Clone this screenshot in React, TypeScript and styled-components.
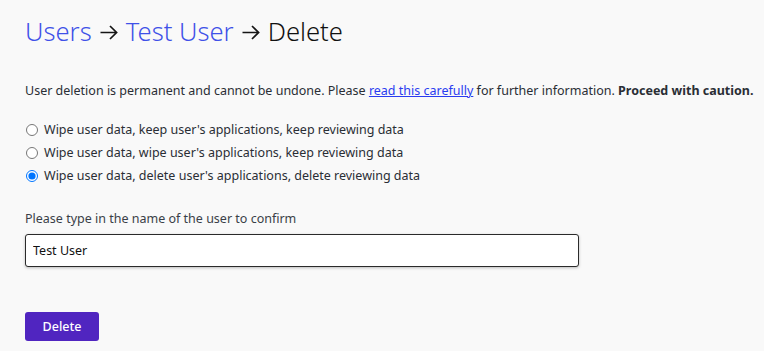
import React from "react";
import styled, { createGlobalStyle } from "styled-components";

const GlobalStyle = createGlobalStyle`
  body {
    margin: 0;
    background: #f9f9f9;
    font-family: "Noto Sans", "Open Sans", sans-serif;
    color: #1f2329;
  }
`;

const Page = styled.main`
  padding: 12px 4px 10px 25px;
`;

const Title = styled.h1`
  display: flex;
  align-items: center;
  margin: 0;
  font-size: 25.6px;
  font-weight: 300;
  line-height: 40px;
  color: #111;
`;

const Crumb = styled.a`
  color: #3f51e8;
  text-decoration: none;
`;

const ArrowIcon = styled.svg`
  width: 18px;
  height: 15px;
  margin: 1px 8px 0;
  flex: none;
`;

const Arrow = () => (
  <ArrowIcon viewBox="0 0 18 15" fill="none" stroke="#151515" strokeWidth="1.7">
    <path d="M0.5 7.5H16.6M10 1L16.6 7.5L10 14" />
  </ArrowIcon>
);

const Notice = styled.p`
  margin: 30px 0 21px;
  font-size: 12.5px;
  line-height: 18px;
  color: #2a2e35;
  white-space: nowrap;

  a {
    color: #2a3cf0;
  }
`;

const Options = styled.div`
  display: flex;
  flex-direction: column;
  gap: 5px;
`;

const Option = styled.label`
  display: flex;
  align-items: center;
  gap: 6px;
  font-size: 12.5px;
  line-height: 18px;
  color: #2a2e35;

  input {
    margin: 0 0 0 1px;
    width: 12px;
    height: 12px;
  }
`;

const Field = styled.div`
  margin-top: 25px;
  display: flex;
  flex-direction: column;
  gap: 6px;
`;

const FieldLabel = styled.label`
  font-size: 12.5px;
  line-height: 18px;
  color: #3a3f47;
`;

const TextInput = styled.input`
  box-sizing: border-box;
  width: 554px;
  height: 33px;
  padding: 0 7px;
  font-family: inherit;
  font-size: 12.5px;
  color: #111;
  background: #fff;
  border: 1px solid #2b2b2b;
  border-radius: 3px;
  box-shadow: 0 1px 3px rgba(0, 0, 0, 0.25);
`;

const DeleteButton = styled.button`
  margin-top: 45px;
  width: 74px;
  height: 29px;
  border: none;
  border-radius: 3px;
  background: #5025c0;
  color: #fff;
  font-family: inherit;
  font-size: 12.5px;
  font-weight: 500;
  cursor: pointer;
`;

const options = [
  "Wipe user data, keep user's applications, keep reviewing data",
  "Wipe user data, wipe user's applications, keep reviewing data",
  "Wipe user data, delete user's applications, delete reviewing data",
];

export default function App() {
  return (
    <>
      <GlobalStyle />
      <Page>
        <Title>
          <Crumb href="#">Users</Crumb>
          <Arrow />
          <Crumb href="#">Test User</Crumb>
          <Arrow />
          <span>Delete</span>
        </Title>
        <Notice>
          User deletion is permanent and cannot be undone. Please{" "}
          <a href="#">read this carefully</a> for further information.{" "}
          <strong>Proceed with caution.</strong>
        </Notice>
        <Options>
          {options.map((o, i) => (
            <Option key={o}>
              <input type="radio" name="mode" defaultChecked={i === 2} />
              {o}
            </Option>
          ))}
        </Options>
        <Field>
          <FieldLabel>Please type in the name of the user to confirm</FieldLabel>
          <TextInput defaultValue="Test User" />
        </Field>
        <DeleteButton>Delete</DeleteButton>
      </Page>
    </>
  );
}
